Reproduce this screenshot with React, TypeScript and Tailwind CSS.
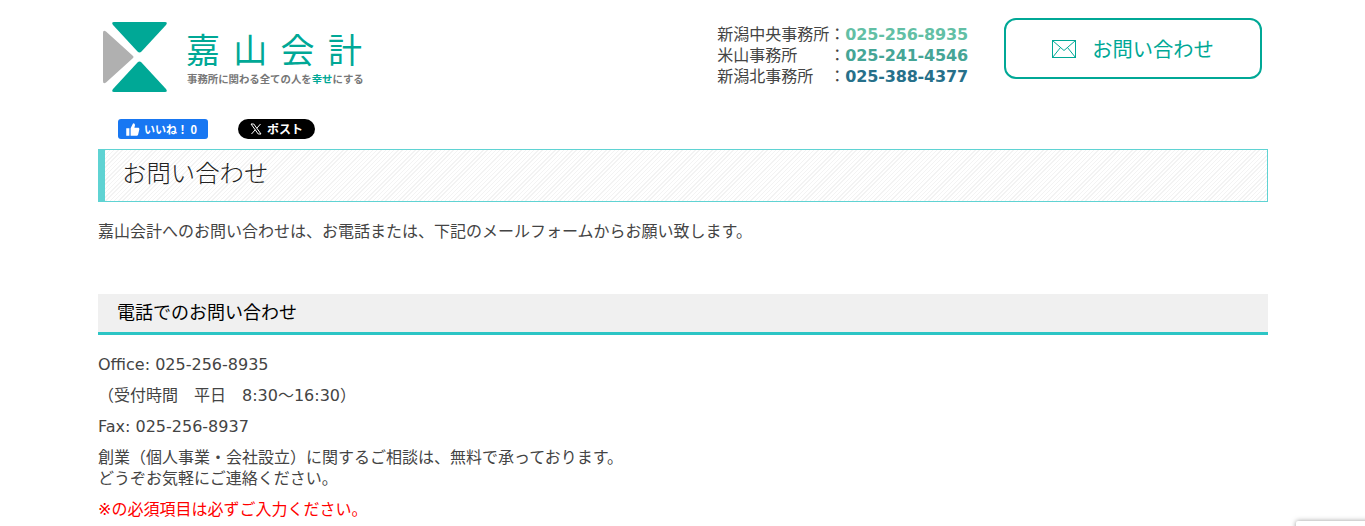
const JP = "font-['Noto_Sans_CJK_JP','Noto_Sans',sans-serif]";
const MIXED = "font-['DejaVu_Sans','Noto_Sans_CJK_JP',sans-serif]";

function Logo() {
  return (
    <div className="flex items-center">
      <svg width="66" height="72" viewBox="0 0 66 72" className="shrink-0">
        <path d="M12 1H63Q66 1 64 4L39.500 30.500Q37.500 32.500 35.500 30.500L11 4Q9 1 12 1Z" fill="#00a896" />
        <path d="M12 71H63Q66 71 64 68L39.500 41.500Q37.500 39.500 35.500 41.500L11 68Q9 71 12 71Z" fill="#00a896" />
        <path d="M1 12Q1 8.500 4 10.500L30.500 34.500Q32.500 36 30.500 37.500L4 61.500Q1 63.500 1 60Z" fill="#b0b0b0" />
      </svg>
      <div className="ml-[19px] flex flex-col">
        <span className="whitespace-nowrap text-[34px] leading-[40px] tracking-[13.300px] text-[#00a896] -ml-[1px]">嘉山会計</span>
        <span className="mt-[3px] whitespace-nowrap text-[10.400px] leading-[14px] font-bold text-[#777]">
          事務所に関わる全ての人を<span className="text-[#00a896]">幸せ</span>にする
        </span>
      </div>
    </div>
  );
}

function PhoneRow({ label, tel, color }: { label: string; tel: string; color: string }) {
  return (
    <div className="flex h-[21px] items-baseline text-[16px] leading-[21px]">
      <span className="w-[112px] whitespace-nowrap text-[#444]">{label}</span>
      <span className="w-[16px] text-[#444]">：</span>
      <span className={`font-['DejaVu_Sans',sans-serif] font-bold tracking-[-0.160px] ${color}`}>{tel}</span>
    </div>
  );
}

export default function App() {
  return (
    <div className={`relative h-[526px] overflow-hidden bg-white ${JP}`}>
      <div className="ml-[98px] w-[1170px]">
        {/* header */}
        <div className="flex h-[119px] items-start justify-between pr-[6px]">
          <div className="ml-[4px] mt-[21px]">
            <Logo />
          </div>
          <div className="flex items-start">
            <div className="mt-[23px] flex flex-col">
              <PhoneRow label="新潟中央事務所" tel="025-256-8935" color="text-[#62bfa5]" />
              <PhoneRow label="米山事務所" tel="025-241-4546" color="text-[#45a596]" />
              <PhoneRow label="新潟北事務所" tel="025-388-4377" color="text-[#27708a]" />
            </div>
            <div className="ml-[36px] mt-[18px] flex h-[61px] w-[258px] items-center justify-center rounded-[12px] border-2 border-[#00a896] text-[20.300px] text-[#00a896]">
              <svg width="24" height="18" viewBox="0 0 24 18" fill="none" stroke="#00a896" strokeWidth="1" className="mr-[16px]">
                <rect x="0.5" y="0.5" width="23" height="17" />
                <path d="M0.5 0.5 L12 10.5 L23.5 0.5 M0.5 17.5 L8.5 7.5 M23.5 17.5 L15.5 7.5" />
              </svg>
              <span className="-mt-[1px]">お問い合わせ</span>
            </div>
          </div>
        </div>

        {/* social buttons */}
        <div className="flex h-[30px] items-start pl-[20px]">
          <div className="flex h-[20px] w-[90px] items-center rounded-[3px] bg-[#1877f2] pl-[7px] text-[11px] font-bold text-white">
            <svg width="15" height="15" viewBox="0 0 24 24" fill="white" className="mr-[4px]">
              <path d="M2 10h5v12H2zM9 10l4-8c2 0 3 1.500 3 3l-1 4h6c1.500 0 2 1 2 2.500l-2 8.500c-.3 1-1 2-2.500 2H9z" />
            </svg>
            いいね！ 0
          </div>
          <div className="ml-[30px] flex h-[20px] w-[77px] items-center rounded-full bg-black pl-[12px] text-[12px] font-bold text-white">
            <svg width="12" height="12" viewBox="0 0 24 24" fill="none" stroke="white" strokeWidth="2" className="mr-[5px]">
              <path d="M2 2h5.500L22 22h-5.500zM21 2 13.500 10.500M10.500 13.500 3 22" />
            </svg>
            ポスト
          </div>
        </div>

        {/* page title */}
        <h1 className="flex h-[53px] items-center border border-l-[7px] border-[#5fd3d3] bg-[repeating-linear-gradient(135deg,#f3f3f3_0px,#f3f3f3_1px,#ffffff_1px,#ffffff_3px)] pb-[7px] pl-[17px] text-[24.400px] font-light text-[#222]">
          お問い合わせ
        </h1>

        <p className="mt-[16px] text-[16px] leading-[24px] text-[#444]">
          嘉山会計へのお問い合わせは、お電話または、下記のメールフォームからお願い致します。
        </p>

        {/* phone section */}
        <h2 className="mt-[52px] flex h-[41px] items-center border-b-[3px] border-[#2cc5c5] bg-[#f0f0f0] pb-[4px] pl-[19px] text-[18px] font-normal text-black">
          電話でのお問い合わせ
        </h2>

        <div className={`mt-[19px] text-[16px] leading-[21px] text-[#444] ${MIXED}`}>
          <p>Office: 025-256-8935</p>
          <p className="mt-[10px]">（受付時間　平日　8:30～16:30）</p>
          <p className="mt-[10px]">Fax: 025-256-8937</p>
          <p className="mt-[10px]">創業（個人事業・会社設立）に関するご相談は、無料で承っております。</p>
          <p>どうぞお気軽にご連絡ください。</p>
          <p className="mt-[10px] text-[#f00]">※の必須項目は必ずご入力ください。</p>
        </div>
      </div>

      {/* recaptcha badge peeking in at the bottom */}
      <div className="absolute left-[1296px] top-[521px] h-[60px] w-[256px] rounded-[2px] bg-white shadow-[0_0_5px_rgba(128,128,128,0.8)]" />
    </div>
  );
}
